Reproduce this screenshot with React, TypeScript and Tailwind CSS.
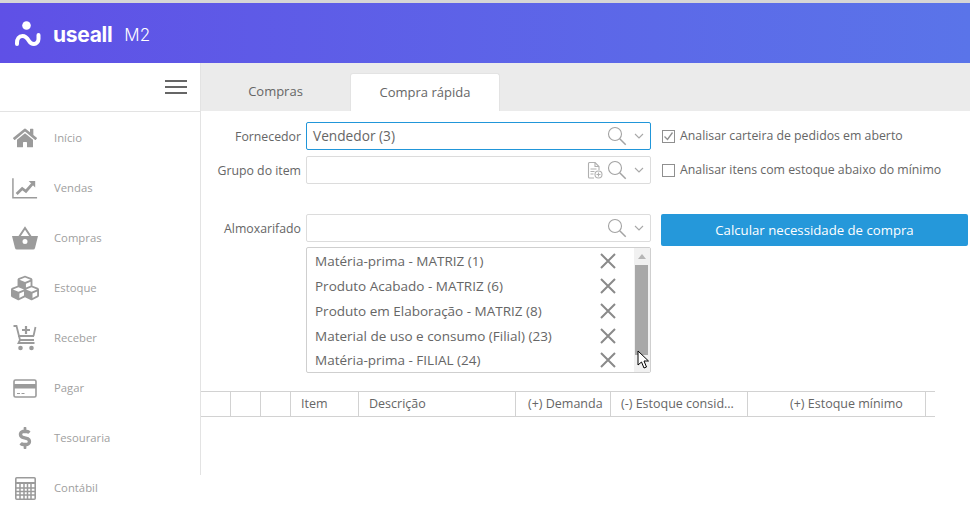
import { ReactNode } from "react";
import { FaCubes, FaHome, FaDollarSign } from "react-icons/fa";

const Chart = () => (
  <svg width="26" height="21" viewBox="0 0 28 22" fill="none">
    <path d="M1 0v21h26" stroke="#9b9b9b" strokeWidth="1.6" />
    <path d="M5 17l6-6 4 3 7-8" stroke="#9b9b9b" strokeWidth="3" />
    <path d="M18 3h7v7z" fill="#9b9b9b" />
  </svg>
);

const Basket = () => (
  <svg width="26" height="24" viewBox="0 0 26 24">
    <path d="M7 11l6-9 6 9" fill="none" stroke="#9b9b9b" strokeWidth="2" />
    <path fillRule="evenodd" d="M0 10h26l-3 12a2 2 0 0 1-2 1.500H5a2 2 0 0 1-2-1.500zM13 13a2.500 2.500 0 1 0 0 5 2.500 2.500 0 0 0 0-5z" fill="#9b9b9b" />
  </svg>
);

const CartPlus = () => (
  <svg width="24" height="26" viewBox="0 0 24 26" fill="none" stroke="#9b9b9b">
    <path d="M0.500 1h3l3.500 14h14" strokeWidth="1.800" />
    <path d="M5 11h16M7 15l-1.500 3h16" strokeWidth="1.800" />
    <path d="M22.500 2l-2 9" strokeWidth="1.800" />
    <path d="M13 1v8M9 5h8" strokeWidth="2.200" />
    <circle cx="7.500" cy="23" r="2.300" fill="#9b9b9b" stroke="none" />
    <circle cx="18.500" cy="23" r="2.300" fill="#9b9b9b" stroke="none" />
  </svg>
);

const Card = () => (
  <svg width="24" height="19" viewBox="0 0 24 19" fill="none">
    <rect x="1" y="1" width="22" height="17" rx="1.500" stroke="#9b9b9b" strokeWidth="1.600" />
    <rect x="1" y="5" width="22" height="4.500" fill="#9b9b9b" />
    <path d="M4 14.500h3M8.500 14.500h3" stroke="#9b9b9b" strokeWidth="1.200" />
  </svg>
);

const Calc = () => (
  <svg width="21" height="23" viewBox="0 0 21 23" fill="none">
    <rect x="0.800" y="0.800" width="19.400" height="21.400" rx="1" stroke="#9b9b9b" strokeWidth="1.600" />
    <rect x="1" y="5" width="19" height="2" fill="#9b9b9b" />
    <path d="M1 11h19M1 14.500h19M1 18h19M5 7v15M9 7v15M12.500 7v15M16 7v15" stroke="#9b9b9b" strokeWidth="1.500" />
  </svg>
);

const Search = () => (
  <svg width="20" height="20" viewBox="0 0 20 20" fill="none" stroke="#a3a3a3">
    <circle cx="8" cy="8" r="6.500" strokeWidth="1.100" />
    <path d="M12.700 12.700l6 6" strokeWidth="1.500" />
  </svg>
);

const Chevron = () => (
  <svg width="10" height="6" viewBox="0 0 10 6" fill="none" stroke="#a8a8a8" strokeWidth="1.100">
    <path d="M1 1l4 4 4-4" />
  </svg>
);

const FileAdd = () => (
  <svg width="16" height="17" viewBox="0 0 16 17" fill="none" stroke="#b0b0b0" strokeWidth="1.100">
    <path d="M7 16H2.500a1 1 0 0 1-1-1V1.500a1 1 0 0 1 1-1H8L12 4.500V8" />
    <path d="M8 .5v4h4M3.500 7h6M3.500 9.500h4M3.500 12h3" />
    <circle cx="11.500" cy="12.500" r="3.500" />
    <path d="M11.500 10.500v4M9.500 12.500h4" />
  </svg>
);

const Cross = () => (
  <svg width="16" height="16" viewBox="0 0 16 16" fill="none" stroke="#8a8a8a" strokeWidth="2">
    <path d="M1 1l14 14M15 1L1 15" />
  </svg>
);

const menu: { label: string; icon: ReactNode }[] = [
  { label: "Início", icon: <FaHome size={24} color="#9b9b9b" /> },
  { label: "Vendas", icon: <Chart /> },
  { label: "Compras", icon: <Basket /> },
  { label: "Estoque", icon: <FaCubes size={28} color="#9b9b9b" /> },
  { label: "Receber", icon: <CartPlus /> },
  { label: "Pagar", icon: <Card /> },
  { label: "Tesouraria", icon: <FaDollarSign size={22} color="#9b9b9b" /> },
  { label: "Contábil", icon: <Calc /> },
];

const grupos = [
  "Matéria-prima - MATRIZ (1)",
  "Produto Acabado - MATRIZ (6)",
  "Produto em Elaboração - MATRIZ (8)",
  "Material de uso e consumo (Filial) (23)",
  "Matéria-prima - FILIAL (24)",
];

const columns = [
  { label: "", w: "w-[30px]", cls: "" },
  { label: "", w: "w-[30px]", cls: "" },
  { label: "", w: "w-[30px]", cls: "" },
  { label: "Item", w: "w-[68px]", cls: "pl-[10px]" },
  { label: "Descrição", w: "w-[157px]", cls: "pl-[10px]" },
  { label: "(+) Demanda", w: "w-[95px]", cls: "pl-[12px]" },
  { label: "(-) Estoque consid...", w: "w-[137px]", cls: "pl-[10px]" },
  { label: "(+) Estoque mínimo", w: "w-[178px]", cls: "pl-[42px]" },
];

const Field = ({ label, focused, children }: { label: string; focused?: boolean; children?: ReactNode }) => (
  <div className="flex items-start w-[450px] shrink-0">
    <label className="w-[100px] h-[28px] pt-[2px] flex items-center justify-end text-[12.3px] text-[#666]">{label}</label>
    <div className={`ml-[5px] w-[345px] h-[28px] flex items-center justify-end gap-[6px] pl-[6px] pr-[6px] rounded-[2px] border ${focused ? "border-[#2196d9]" : "border-[#dcdcdc]"}`}>
      {children && <span className="flex-1 text-[13.7px] text-[#666]">{children}</span>}
      <Search />
      <span className="ml-[1px] flex"><Chevron /></span>
    </div>
  </div>
);

const App = () => (
  <div className="w-[970px] h-[507px] overflow-hidden bg-white text-[#666] font-['Open_Sans',sans-serif]">
    <div className="h-[3px] bg-[#d6d6d6]" />
    <header className="h-[60px] flex items-center pl-[15px] bg-gradient-to-r from-[#5f50e6] to-[#5a74e9]">
      <svg width="27" height="25" viewBox="0 0 27 25" fill="none">
        <circle cx="11.500" cy="4.500" r="4.300" fill="#fff" />
        <path d="M2 23v-1c0-4 2-7 5.500-7s5 2.500 6.500 5 3 3 5 3 4.500-2 4.500-5v-4" stroke="#fff" strokeWidth="4" strokeLinecap="round" />
      </svg>
      <span className="ml-[11px] mt-[3px] text-[21px] leading-none font-bold text-white tracking-[-0.3px] font-['Inter',sans-serif]">useall</span>
      <span className="ml-[12px] mt-[4px] text-[17px] leading-none font-light text-white font-['Inter',sans-serif]">M2</span>
    </header>
    <div className="flex">
      <aside className="w-[200px] shrink-0">
        <div className="h-[49px] flex items-center justify-end pr-[13px] border-b border-[#e3e3e3]">
          <div className="w-[22px] flex flex-col gap-[4px]">
            <span className="h-[2px] bg-[#666]" />
            <span className="h-[2px] bg-[#666]" />
            <span className="h-[2px] bg-[#666]" />
          </div>
        </div>
        <nav className="pt-[1px]">
          {menu.map((m) => (
            <div key={m.label} className="h-[50px] flex items-center">
              <span className="w-[50px] flex justify-center">{m.icon}</span>
              <span className="ml-[4px] text-[11.3px] text-[#a0a0a0]">{m.label}</span>
            </div>
          ))}
        </nav>
      </aside>
      <main className="flex-1 h-[412px] border-l border-[#e3e3e3]">
        <div className="h-[48px] bg-[#ebebeb] flex items-end">
          <div className="w-[149px] h-[38px] flex items-center justify-center text-[13px] text-[#666]">Compras</div>
          <div className="w-[150px] h-[38px] flex items-center justify-center text-[13px] text-[#666] bg-white rounded-t-[3px] border-x border-t border-[#e3e3e3]">Compra rápida</div>
        </div>
        <div className="pt-[11px] flex flex-col">
          <div className="flex items-center">
            <Field label="Fornecedor" focused>Vendedor (3)</Field>
            <label className="ml-[11px] flex items-center gap-[5px] text-[12.3px] text-[#666]">
              <span className="w-[13px] h-[13px] border border-[#8f8f8f] flex items-center justify-center">
                <svg width="11" height="11" viewBox="0 0 11 11" fill="none" stroke="#8f8f8f" strokeWidth="1.300"><path d="M1.500 5.500l3 3 5-7" /></svg>
              </span>
              Analisar carteira de pedidos em aberto
            </label>
          </div>
          <div className="mt-[6px] flex items-center">
            <div className="relative">
              <Field label="Grupo do item" />
              <span className="absolute left-[386px] top-[6px] flex"><FileAdd /></span>
            </div>
            <label className="ml-[11px] flex items-center gap-[5px] text-[12.3px] text-[#666]">
              <span className="w-[13px] h-[13px] border border-[#8f8f8f]" />
              Analisar itens com estoque abaixo do mínimo
            </label>
          </div>
          <div className="mt-[30px] flex items-start">
            <Field label="Almoxarifado" />
            <button className="ml-[10px] w-[307px] h-[32px] pt-[1px] rounded-[2px] bg-[#2598da] text-white text-[13.2px] flex items-center justify-center">Calcular necessidade de compra</button>
          </div>
          <div className="mt-[1px] ml-[105px] w-[345px] h-[126px] flex rounded-[2px] border border-[#cfcfcf]">
            <ul className="flex-1 pl-[8px] pt-[1px]">
              {grupos.map((g) => (
                <li key={g} className="h-[24.75px] flex items-center justify-between pr-[18px] text-[13.5px] text-[#666]">
                  <span>{g}</span>
                  <Cross />
                </li>
              ))}
            </ul>
            <div className="relative w-[16px] pr-[1px] bg-[#f1f1f1] flex flex-col items-center">
              <span className="mt-[6px] w-0 h-0 border-x-[4px] border-x-transparent border-b-[5px] border-b-[#b5b5b5]" />
              <span className="mt-[6px] w-[13px] h-[90px] bg-[#a8a8a8]" />
              <svg className="absolute left-[3px] top-[102px]" width="13" height="19" viewBox="0 0 13 19">
                <path d="M1 1v14l3.500-3 2.500 6 2.500-1-2.500-6h4.500z" fill="#fff" stroke="#000" strokeWidth="1" />
              </svg>
            </div>
          </div>
          <div className="mt-[18px] w-[734px] h-[26px] flex border-y border-[#d2d2d2]">
            {columns.map((c, i) => (
              <div key={i} className={`${c.w} ${c.cls} shrink-0 flex items-center text-[12.5px] text-[#666] border-r border-[#d2d2d2] whitespace-nowrap`}>{c.label}</div>
            ))}
          </div>
        </div>
      </main>
    </div>
  </div>
);

export default App;
